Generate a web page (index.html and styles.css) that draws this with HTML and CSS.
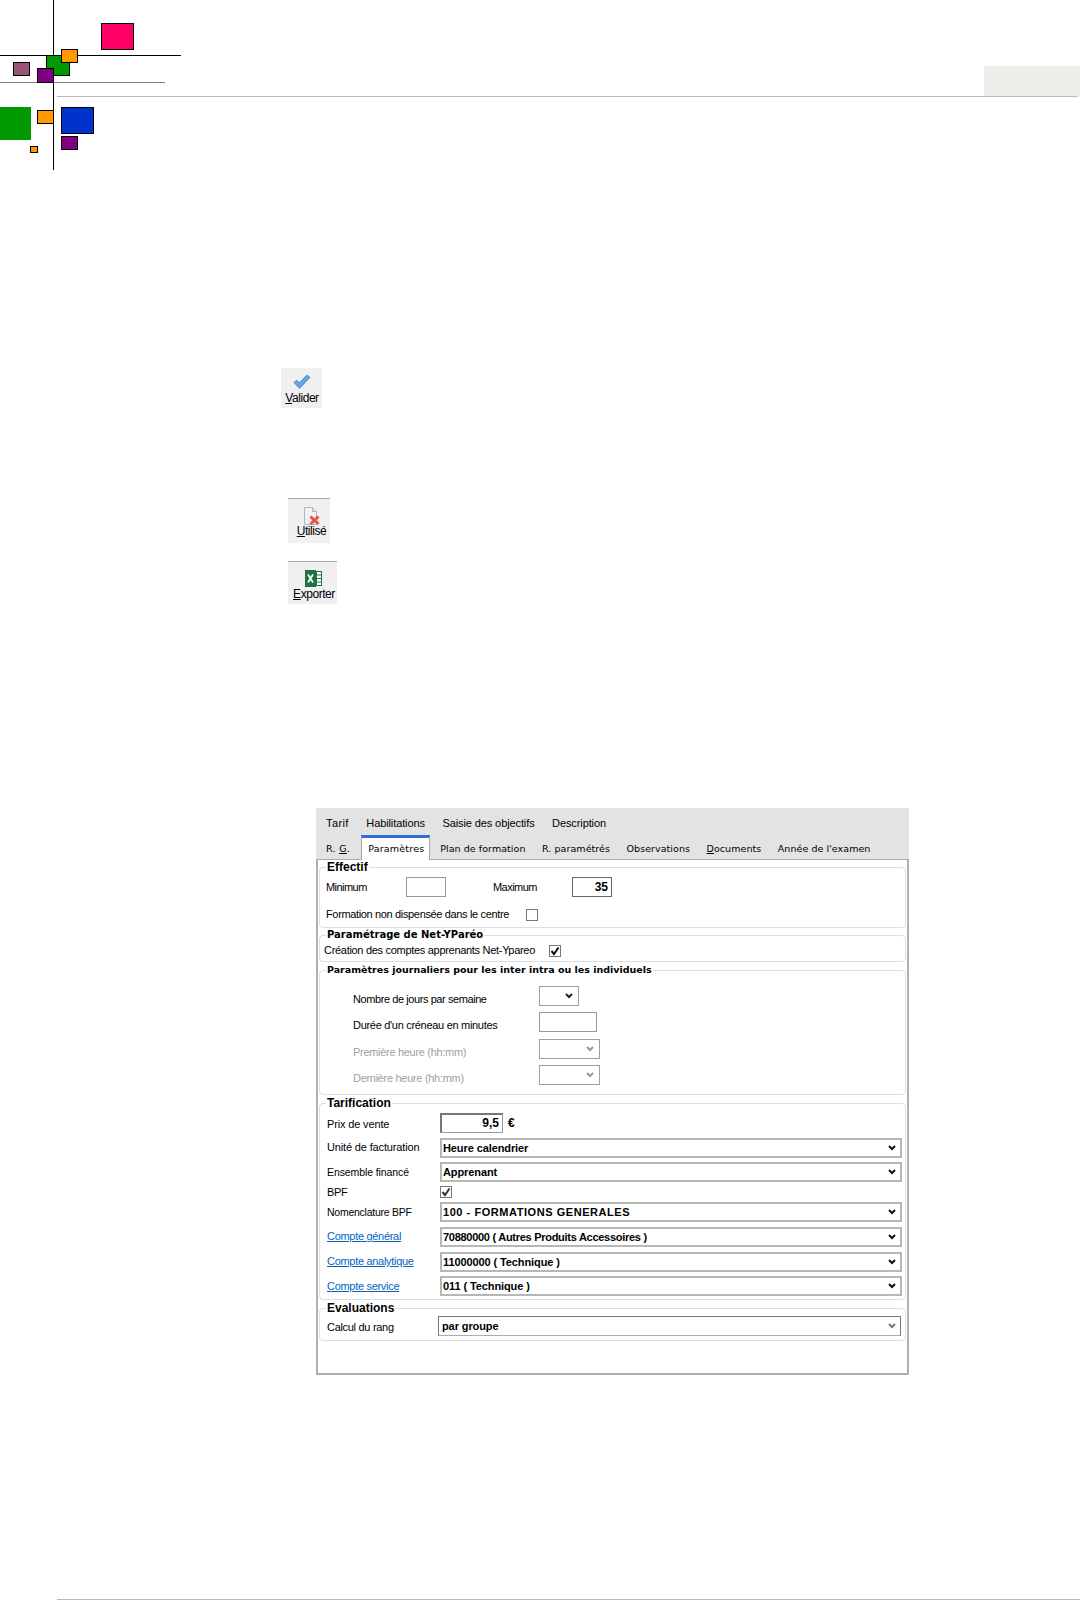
FILE: index.html
```html
<!DOCTYPE html>
<html lang="fr">
<head>
<meta charset="utf-8">
<title>Paramètres</title>
<link rel="stylesheet" href="styles.css">
</head>
<body>
<svg class="logo" width="182" height="171" viewBox="0 0 182 171">
  <path class="l-black" d="M53.5 0V170M0 55.5H181"/>
  <path class="l-grey" d="M0 82.5H165"/>
  <rect class="c-pink" x="101.5" y="23.5" width="32" height="26"/>
  <rect class="c-green" x="46.5" y="55.5" width="23" height="20"/>
  <rect class="c-orange" x="61.5" y="49.5" width="16" height="13"/>
  <rect class="c-mauve" x="13.5" y="62.5" width="16" height="13"/>
  <rect class="c-purple" x="37.5" y="68.5" width="16" height="14"/>
  <rect class="c-green-flat" x="0" y="107" width="31" height="33"/>
  <rect class="c-orange" x="37.5" y="110.5" width="16" height="13"/>
  <rect class="c-blue" x="61.5" y="107.5" width="32" height="26"/>
  <rect class="c-purple" x="61.5" y="136.5" width="16" height="13"/>
  <rect class="c-orange" x="30.5" y="146.5" width="7" height="6"/>
</svg>

<header class="top"><div class="tag"></div></header>
<div class="rule"></div>

<main class="content">
  <div class="tool tool-valider">
    <svg width="18" height="15" viewBox="0 0 18 15"><path d="M1 8.5l2.8-2.3 2.4 2.8L14 1l3 2.4L6.5 14.5z" fill="#62a6ea" stroke="#3f7fc0" stroke-width=".8" stroke-linejoin="round"/></svg>
    <span class="tool-text"><u>V</u>alider</span>
  </div>

  <div class="tool tool-utilise">
    <svg width="18" height="18" viewBox="0 0 18 18"><path d="M1.5.5h8l4 4v13h-12z" fill="#f2f2f2" stroke="#b5b5b5"/><path d="M9.5.5v4h4" fill="#dedede" stroke="#b5b5b5"/><path d="M7.5 9.5l8 7.5M15.5 9.5l-8 7.5" stroke="#e2574c" stroke-width="3"/></svg>
    <span class="tool-text tool-text-up"><u>U</u>tilisé</span>
  </div>

  <div class="tool tool-exporter">
    <svg width="18" height="17" viewBox="0 0 18 17"><rect x="6.5" y="1.5" width="10" height="14" fill="#fff" stroke="#1f7246"/><path d="M11.5 1v15M6 5h11M6 8.5h11M6 12h11" stroke="#1f7246"/><rect x="0" y="0" width="11" height="17" fill="#1f7246"/><path d="M3 4.5l5 8M8 4.5l-5 8" stroke="#fff" stroke-width="1.7"/></svg>
    <span class="tool-text"><u>E</u>xporter</span>
  </div>

  <section class="form">
    <nav class="tabs">
      <div class="tabs-top">
        <span>Tarif</span><span>Habilitations</span><span>Saisie des objectifs</span><span>Description</span>
      </div>
      <div class="tabs-bottom">
        <span class="tab">R. <u>G</u>.</span>
        <span class="tab tab-active">Paramètres</span>
        <span class="tab">Plan de formation</span>
        <span class="tab">R. paramétrés</span>
        <span class="tab">Observations</span>
        <span class="tab"><u>D</u>ocuments</span>
        <span class="tab">Année de l'examen</span>
      </div>
    </nav>

    <div class="panel">
      <fieldset class="group group-effectif">
        <legend>Effectif</legend>
        <div class="row">
          <span class="lbl lbl-mm w-80">Minimum</span><span class="box w-40 h-20"></span>
          <span class="lbl lbl-mm w-79 ml-47">Maximum</span><span class="box box-num w-40 h-20">35</span>
        </div>
        <div class="row row-check">
          <span class="lbl lbl-tighter w-200">Formation non dispensée dans le centre</span><span class="check"></span>
        </div>
      </fieldset>

      <fieldset class="group group-net">
        <legend>Paramétrage de Net-YParéo</legend>
        <div class="row">
          <span class="lbl w-225">Création des comptes apprenants Net-Ypareo</span>
          <span class="check check-dark"><svg width="10" height="10" viewBox="0 0 10 10"><path d="M1.5 5l2.5 3 4.5-6.5" fill="none" stroke="#111" stroke-width="2"/></svg></span>
        </div>
      </fieldset>

      <fieldset class="group group-daily">
        <legend>Paramètres journaliers pour les inter intra ou les individuels</legend>
        <div class="daily">
          <span class="lbl lbl-nombre lbl-down">Nombre de jours par semaine</span>
          <span class="select select-plain w-40"><svg class="chev" width="8" height="6" viewBox="0 0 8 6"><path d="M1 1l3 3 3-3" fill="none" stroke="#222" stroke-width="2"/></svg></span>
          <span class="lbl lbl-down-s">Durée d'un créneau en minutes</span>
          <span class="box w-58"></span>
          <span class="lbl lbl-off lbl-down row-shift">Première heure (hh:mm)</span>
          <span class="select select-plain w-61 row-shift"><svg class="chev" width="8" height="6" viewBox="0 0 8 6"><path d="M1 1l3 3 3-3" fill="none" stroke="#999" stroke-width="2"/></svg></span>
          <span class="lbl lbl-off lbl-down">Dernière heure (hh:mm)</span>
          <span class="select select-plain w-61"><svg class="chev" width="8" height="6" viewBox="0 0 8 6"><path d="M1 1l3 3 3-3" fill="none" stroke="#999" stroke-width="2"/></svg></span>
        </div>
      </fieldset>

      <fieldset class="group group-tarif">
        <legend>Tarification</legend>
        <div class="tarif">
          <div class="row h-20">
            <span class="lbl lbl-loose lbl-nudge w-113">Prix de vente</span>
            <span class="box box-num box-sunken w-63 h-20">9,5</span><b class="euro">€</b>
          </div>
          <div class="row h-20">
            <span class="lbl lbl-loose w-113">Unité de facturation</span>
            <span class="select w-464"><b class="val">Heure calendrier</b><svg class="chev" width="8" height="6" viewBox="0 0 8 6"><path d="M1 1l3 3 3-3" fill="none" stroke="#111" stroke-width="2"/></svg></span>
          </div>
          <div class="row h-20">
            <span class="lbl lbl-small lbl-ens w-113">Ensemble financé</span>
            <span class="select w-464"><b class="val">Apprenant</b><svg class="chev" width="8" height="6" viewBox="0 0 8 6"><path d="M1 1l3 3 3-3" fill="none" stroke="#111" stroke-width="2"/></svg></span>
          </div>
          <div class="row h-11">
            <span class="lbl w-113">BPF</span>
            <span class="check check-dark"><svg width="10" height="10" viewBox="0 0 10 10"><path d="M1.5 5l2.5 3 4.5-6.5" fill="none" stroke="#333" stroke-width="2"/></svg></span>
          </div>
          <div class="row h-20">
            <span class="lbl lbl-small w-113">Nomenclature BPF</span>
            <span class="select w-464"><b class="val val-caps">100 - FORMATIONS GENERALES</b><svg class="chev" width="8" height="6" viewBox="0 0 8 6"><path d="M1 1l3 3 3-3" fill="none" stroke="#111" stroke-width="2"/></svg></span>
          </div>
          <div class="row h-20">
            <span class="lbl w-113"><a class="link" href="#">Compte général</a></span>
            <span class="select w-464"><b class="val val-tight">70880000 ( Autres Produits Accessoires )</b><svg class="chev" width="8" height="6" viewBox="0 0 8 6"><path d="M1 1l3 3 3-3" fill="none" stroke="#111" stroke-width="2"/></svg></span>
          </div>
          <div class="row h-20">
            <span class="lbl w-113"><a class="link" href="#">Compte analytique</a></span>
            <span class="select w-464"><b class="val">11000000 ( Technique )</b><svg class="chev" width="8" height="6" viewBox="0 0 8 6"><path d="M1 1l3 3 3-3" fill="none" stroke="#111" stroke-width="2"/></svg></span>
          </div>
          <div class="row h-20">
            <span class="lbl w-113"><a class="link" href="#">Compte service</a></span>
            <span class="select w-464"><b class="val">011 ( Technique )</b><svg class="chev" width="8" height="6" viewBox="0 0 8 6"><path d="M1 1l3 3 3-3" fill="none" stroke="#111" stroke-width="2"/></svg></span>
          </div>
        </div>
      </fieldset>

      <fieldset class="group group-eval">
        <legend>Evaluations</legend>
        <div class="row">
          <span class="lbl lbl-nudge w-111">Calcul du rang</span>
          <span class="select select-sunken w-463"><b class="val">par groupe</b><svg class="chev" width="8" height="6" viewBox="0 0 8 6"><path d="M1 1l3 3 3-3" fill="none" stroke="#777" stroke-width="2"/></svg></span>
        </div>
      </fieldset>
    </div>
  </section>
</main>

<footer class="foot"></footer>
</body>
</html>
```
FILE: styles.css
```css
* { box-sizing: border-box; }
html, body { margin: 0; padding: 0; }
body {
  position: relative;
  height: 1600px;
  overflow: hidden;
  background: #fff;
  color: #000;
  font-family: "Liberation Sans", Arial, sans-serif;
  font-size: 11px;
}

/* logo */
.logo { position: absolute; left: 0; top: 0; z-index: 2; }
.logo rect { stroke: #000; stroke-width: 1; }
.l-black { stroke: #000; stroke-width: 1; fill: none; }
.l-grey { stroke: #808080; stroke-width: 1; fill: none; }
.logo .c-pink { fill: #ff0066; }
.logo .c-green { fill: #009900; }
.logo .c-orange { fill: #ff9900; }
.logo .c-mauve { fill: #995577; }
.logo .c-purple { fill: #800080; }
.logo .c-blue { fill: #0033cc; }
.logo .c-green-flat { fill: #009900; stroke: none; }

/* header */
.top { height: 97px; padding-top: 66px; display: flex; justify-content: flex-end; }
.tag { width: 96px; height: 31px; background: #efeeea; }
.rule { height: 1px; margin: -1px 3px 0 57px; background: #b8b8b8; position: relative; }

/* toolbar buttons */
.content { padding-top: 271px; }
.tool {
  display: flex;
  flex-direction: column;
  align-items: center;
  background: #f0f0f0;
}
.tool-text { line-height: 14px; font-size: 12px; letter-spacing: -.45px; }
.tool-text-up { margin-top: -1px; }
.tool-valider { width: 41px; height: 40px; margin-left: 281px; padding: 6px 0 0 1px; }
.tool-valider .tool-text { margin-top: 2px; }
.tool-utilise { width: 42px; height: 45px; margin: 90px 0 0 288px; padding: 8px 0 0 5px; border-top: 1px solid #aaa; }
.tool-exporter { width: 49px; height: 43px; margin: 18px 0 0 288px; padding: 8px 0 0 3px; border-top: 1px solid #aaa; }

/* form */
.form { width: 593px; height: 567px; margin: 204px 0 0 316px; display: flex; flex-direction: column; }
.tabs { height: 51px; background: #e3e3e3; flex: none; }
.tabs-top { display: flex; gap: 17.5px; height: 27px; padding: 9px 0 0 10px; line-height: 13px; font-size: 11px; }
.tabs-top span { letter-spacing: -.1px; }
.tabs-top span:first-child { letter-spacing: .4px; }
.tabs-bottom { display: flex; height: 24px; padding-left: 10px; font-family: "DejaVu Sans", sans-serif; font-size: 9.5px; }
.tab { margin-right: 16.5px; padding-top: 7px; line-height: 14px; letter-spacing: .06px; }
.tab:first-child { margin-right: 11px; letter-spacing: .3px; }
.tab-active {
  width: 69px;
  height: 25px;
  margin-right: 10px;
  padding: 4px 0 0 6px;
  letter-spacing: .2px;
  background: #fff;
  border-top: 3px solid #2b6fd8;
  border-left: 1px solid #aaa;
  border-right: 1px solid #aaa;
  position: relative;
  z-index: 1;
}
.panel {
  flex: 1;
  padding: 0 1px 0 1px;
  background: #fff;
  border: 2px solid #b0b0b0;
  border-top: 1px solid #aaa;
}

.group { margin: 0; padding: 0; border: 1px solid #d6e0e6; border-radius: 4px; min-width: 0; }
.group legend { padding: 0 1px; font-weight: bold; font-size: 12px; line-height: 14px; }
.group-effectif { padding: 3px 0 6px 6px; }
.group-effectif legend { margin-left: 0; }
.group-net { padding: 2px 0 4px 4px; }
.group-net legend { margin-left: 2px; font-family: "DejaVu Sans", sans-serif; font-size: 10px; }
.group-daily { padding: 9px 0 9px 33px; margin-top: 1px; }
.group-daily legend { margin-left: -27px; font-family: "DejaVu Sans", sans-serif; font-size: 9.5px; }
.group-tarif { padding: 3px 3px 3px 7px; margin-top: 1px; }
.group-tarif legend { margin-left: -1px; }
.group-eval { padding: 1px 3px 4px 7px; margin-top: 1px; }
.group-eval legend { margin-left: -1px; }

.row { display: flex; align-items: center; }
.row-check { margin-top: 11px; }
.lbl { display: block; white-space: nowrap; font-size: 11px; line-height: 13px; letter-spacing: -.3px; }
.lbl-mm { letter-spacing: -.55px; }
.lbl-tighter { letter-spacing: -.35px; }
.lbl-nombre { letter-spacing: -.42px; }
.lbl-loose { letter-spacing: -.15px; }
.lbl-small { font-size: 10.5px; letter-spacing: -.25px; }
.lbl-ens { letter-spacing: -.1px; }
.lbl-off { color: #a0a0a0; }
.lbl-down { padding-top: 7px; }
.lbl-down-s { padding-top: 6px; }
.lbl-nudge { padding-top: 2px; }
.link { color: #0563c1; }

.w-40 { width: 40px; }
.w-58 { width: 58px; }
.w-61 { width: 61px; }
.w-63 { width: 63px; }
.w-79 { width: 79px; }
.w-80 { width: 80px; }
.w-111 { width: 111px; }
.w-113 { width: 113px; flex: none; }
.w-200 { width: 200px; }
.w-225 { width: 225px; }
.w-463 { width: 463px; }
.w-464 { width: 464px; }
.ml-47 { margin-left: 47px; }
.h-20 { height: 20px; }
.h-11 { height: 11px; }

.box { display: block; height: 20px; border: 1px solid #999; background: #fff; }
.box-num { border-color: #666; text-align: right; padding-right: 3px; font-weight: bold; font-size: 12px; line-height: 18px; }
.box-sunken { border-width: 2px 1px 1px 2px; border-color: #777 #999 #999 #777; line-height: 16px; }
.euro { margin-left: 5px; font-size: 12px; }

.check {
  display: flex;
  align-items: center;
  justify-content: center;
  flex: none;
  width: 12px;
  height: 12px;
  border: 1px solid #777;
  background: #fff;
}

.daily { display: grid; grid-template-columns: 186px auto; justify-content: start; justify-items: start; align-items: center; row-gap: 6px; }
.row-shift { margin-top: 1px; }

.select {
  display: flex;
  align-items: center;
  justify-content: space-between;
  height: 20px;
  padding: 0 4px 0 1px;
  background: #fff;
  border: 2px solid #b4b9b4;
}
.select-plain { justify-content: flex-end; border: 1px solid #a0a0a0; padding-right: 5px; }
.select-sunken { border-width: 1px; border-color: #777 #777 #a9afa9 #777; padding-left: 3px; }
.val { font-size: 11px; line-height: 14px; letter-spacing: -.1px; }
.val-tight { letter-spacing: -.28px; }
.val-caps { letter-spacing: .55px; }
.tarif { display: flex; flex-direction: column; gap: 4.6px; }

.foot { position: absolute; left: 57px; right: 0; top: 1599px; height: 1px; background: #b8b8b8; }
```
